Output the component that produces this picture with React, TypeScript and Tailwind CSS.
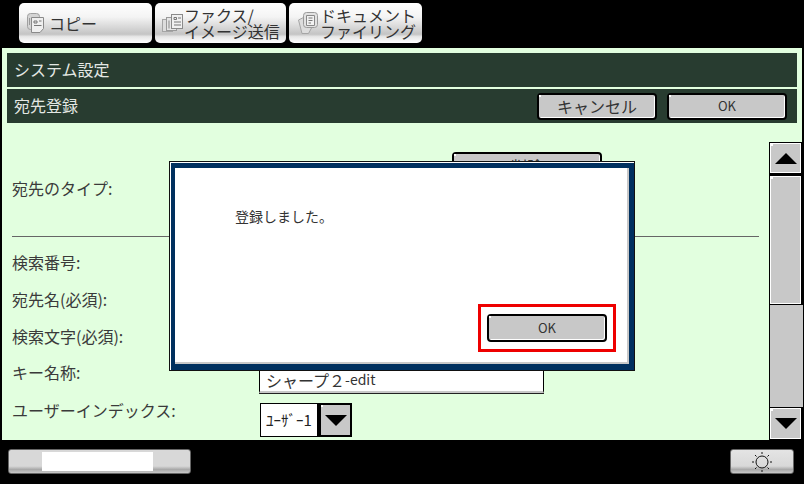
const jpFont = '[font-family:"Noto_Sans_CJK_JP","Liberation_Sans",sans-serif]';

function Dot() {
  return <span className="absolute left-0 top-0 h-[2px] w-[2px] bg-white" />;
}

function GrayButton({label, className}: {label: string; className: string}) {
  return (
    <button
      className={`relative flex items-center justify-center rounded-[4px] border-2 border-black bg-[#c8c8c8] text-[#333] shadow-[inset_-1px_-1px_0_#fff] ${className}`}
      type="button"
    >
      <Dot />
      {label}
    </button>
  );
}

function CopyIcon() {
  return (
    <svg className="h-[20px] w-[17px] shrink-0" viewBox="0 0 17 20" fill="none">
      <rect x="0.5" y="0.5" width="12" height="16" rx="3" fill="#d4d4d4" stroke="#a0a0a0" />
      <path d="M4.500 4.500h12v11l-3.500 4h-8.500z" fill="#efefef" stroke="#8a8a8a" />
      <path d="M7 8h3v2H7zM12 8h2.500M7 12.500h7.500" stroke="#777" />
      <path d="M2.500 5v7" stroke="#999" />
    </svg>
  );
}

function FaxIcon() {
  return (
    <svg className="h-[18px] w-[21px] shrink-0" viewBox="0 0 21 18" fill="none">
      <rect x="0.5" y="5.500" width="10" height="12" fill="#ddd" stroke="#a5a5a5" />
      <rect x="4.500" y="3.500" width="10" height="13" fill="#e6e6e6" stroke="#9a9a9a" />
      <rect x="9.500" y="0.500" width="11" height="14" fill="#f0f0f0" stroke="#8a8a8a" />
      <path d="M12 3.500h2.500v2H12zM16 4h3M12 8h7M12 11h7" stroke="#777" />
      <path d="M7 6.500v8" stroke="#888" />
    </svg>
  );
}

function FileIcon() {
  return (
    <svg className="h-[22px] w-[20px] shrink-0" viewBox="0 0 20 22" fill="none">
      <path d="M0.500 8l6-3 7 11-3 5.500H4z" fill="#ddd" stroke="#a5a5a5" />
      <rect x="5.500" y="0.500" width="14" height="15" rx="3" fill="#e2e2e2" stroke="#9a9a9a" />
      <path d="M8.500 3.500h8v10h-8z" fill="#f2f2f2" stroke="#8a8a8a" />
      <path d="M10.500 6h4M10.500 8.500h4M10.500 11h2.500" stroke="#777" />
    </svg>
  );
}

function Tab({icon, lines, className}: {icon: React.ReactNode; lines: string[]; className: string}) {
  return (
    <div
      className={`flex h-[40px] items-center rounded-[5px] bg-[linear-gradient(#ffffff_0%,#f4f4f4_35%,#c4c4c4_78%,#e6e6e6_84%,#ffffff_100%)] text-[#333] ${className}`}
    >
      {icon}
      <div className="ml-[1px] text-[16px] leading-[16px]">
        {lines.map((line) => (
          <div key={line} className="h-[16px] whitespace-nowrap">
            {line}
          </div>
        ))}
      </div>
    </div>
  );
}

function TitleBar({children, className}: {children: React.ReactNode; className: string}) {
  return (
    <div className={`flex h-[34px] items-center bg-[#283c30] pb-[2px] pl-[7px] text-[16px] text-[#e4e8e4] ${className}`}>
      {children}
    </div>
  );
}

function FormRow({label, height, children}: {label: string; height: string; children?: React.ReactNode}) {
  return (
    <div className={`flex items-start ${height}`}>
      <div className="mt-[7px] w-[247px] shrink-0 whitespace-nowrap text-[16px] leading-[20px] text-[#3a3a3a]">{label}</div>
      {children}
    </div>
  );
}

function ArrowButton({up, className}: {up: boolean; className: string}) {
  return (
    <div className={`relative flex items-center justify-center bg-[#c8c8c8] shadow-[0_0_0_1px_#fff] ${className}`}>
      <Dot />
      <div
        className={`h-0 w-0 border-x-[11px] border-x-transparent ${up ? 'border-b-[11px] border-b-black' : 'border-t-[11px] border-t-black'}`}
      />
    </div>
  );
}

function SunIcon() {
  return (
    <svg className="h-[22px] w-[22px]" viewBox="0 0 22 22" fill="none" stroke="#111">
      <circle cx="11" cy="11" r="6" />
      <path d="M11 1v2M11 19v2M1 11h2M19 11h2M4 4l1.500 1.500M16.500 16.500L18 18M18 4l-1.500 1.500M5.500 16.500L4 18" />
    </svg>
  );
}

export default function App() {
  return (
    <div className={`relative flex h-[484px] w-[804px] flex-col overflow-hidden bg-black ${jpFont}`}>
      <div className="flex h-[48px] gap-[3px] pl-[19px] pt-[3px]">
        <Tab className="w-[133px] pl-[8px] [&>div]:ml-[5px]" icon={<CopyIcon />} lines={['コピー']} />
        <Tab className="w-[131px] pl-[7px]" icon={<FaxIcon />} lines={['ファクス/', 'イメージ送信']} />
        <Tab className="w-[133px] pl-[9px] [&>div]:ml-[2px]" icon={<FileIcon />} lines={['ドキュメント', 'ファイリング']} />
      </div>

      <div className="ml-[2px] flex h-[392px] w-[800px] flex-col bg-[#e2ffdf]">
        <div className="flex flex-col gap-[2px] pl-[5px] pr-[5px] pt-[5px]">
          <TitleBar className="">システム設定</TitleBar>
          <TitleBar className="justify-between pr-[10px]">
            <span>宛先登録</span>
            <div className="mt-[2px] flex gap-[10px]">
              <GrayButton className="h-[27px] w-[120px] text-[16px]" label="キャンセル" />
              <GrayButton className="h-[27px] w-[120px] text-[13px]" label="OK" />
            </div>
          </TitleBar>
        </div>

        <div className="flex min-h-0 flex-1">
          <div className="flex-1 pl-[10px] pr-[10px]">
            <div className="flex h-[103px] items-start">
              <div className="mt-[55px] w-[440px] shrink-0 text-[16px] leading-[20px] text-[#3a3a3a]">宛先のタイプ:</div>
              <GrayButton className="mt-[29px] h-[28px] w-[150px] text-[16px]" label="削除" />
            </div>
            <div className="mt-[10px] h-px bg-[#666]" />
            <div className="mt-[8px]">
              <FormRow label="検索番号:" height="h-[37px]" />
              <FormRow label="宛先名(必須):" height="h-[37px]" />
              <FormRow label="検索文字(必須):" height="h-[36px]" />
              <FormRow label="キー名称:" height="h-[38px]">
                <div className="mt-[13px] flex h-[25px] w-[285px] items-center border-b-2 border-l border-r border-black border-b-[#c8c8c8] bg-white pl-[6px] text-[16px] text-[#333] shadow-[0_1px_0_#222]">
                  シャープ２<span className="text-[14px]">-edit</span>
                </div>
              </FormRow>
              <FormRow label="ユーザーインデックス:" height="h-[47px]">
                <div className="ml-[1px] mt-[10px] flex h-[34px]">
                  <div className="flex w-[58px] items-center justify-center border border-black bg-white text-[15px] text-[#222]">ﾕｰｻﾞｰ1</div>
                  <div className="relative flex w-[34px] items-center justify-center border-2 border-l-[3px] border-black bg-[#c8c8c8]">
                    <Dot />
                    <div className="h-0 w-0 border-x-[11px] border-t-[11px] border-x-transparent border-t-black" />
                  </div>
                </div>
              </FormRow>
            </div>
          </div>

          <div className="mt-[19px] flex w-[33px] shrink-0 flex-col bg-black pl-[2px] pr-[2px] pt-[2px]">
            <ArrowButton up className="h-[28px] shrink-0" />
            <div className="relative mt-[5px] h-[126px] shrink-0 bg-[#c8c8c8] shadow-[0_0_0_1px_#fff]">
              <Dot />
            </div>
            <div className="-ml-[1px] -mr-[3px] mt-[2px] h-[102px] shrink-0 bg-[#c8c8c8]" />
            <ArrowButton up={false} className="mt-[2px] h-[29px] shrink-0" />
          </div>
        </div>
      </div>

      <div className="flex flex-1 items-start justify-between pl-[8px] pr-[10px] pt-[9px]">
        <div className="flex h-[25px] w-[183px] justify-start rounded-[3px] border border-[#666] bg-[linear-gradient(#d8d8d8_0%,#d8d8d8_70%,#a8a8a8_85%,#c8c8c8_100%)] pl-[33px] pt-[2px]">
          <div className="h-[19px] w-[111px] bg-white" />
        </div>
        <div className="flex h-[25px] w-[64px] items-center justify-center rounded-[3px] border border-[#666] bg-[linear-gradient(#e4e4e4_0%,#d8d8d8_70%,#a8a8a8_85%,#c8c8c8_100%)]">
          <SunIcon />
        </div>
      </div>

      <div className="absolute left-[169px] top-[161px] h-[210px] w-[466px] border border-[#111] bg-[#00305f] pb-[6px] pl-[5px] pr-[5px] pt-[6px] shadow-[inset_1px_1px_0_#fff]">
        <div className="flex h-full flex-col border-b-2 border-r-2 border-[#c8c8c8] bg-white">
          <div className="pl-[60px] pt-[38px] text-[14px] leading-[20px] text-[#333]">登録しました。</div>
          <div className="mb-[10px] ml-[303px] mt-auto flex h-[48px] w-[138px] items-center justify-center border-[3px] border-[#ee0000]">
            <GrayButton className="h-[28px] w-[120px] text-[13px]" label="OK" />
          </div>
        </div>
      </div>
    </div>
  );
}
